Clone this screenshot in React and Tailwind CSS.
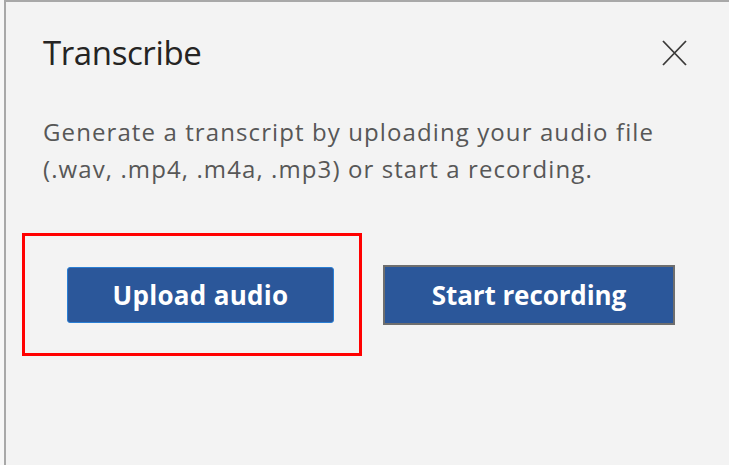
import React from "react";

export default function App() {
  return (
    <div className="w-[729px] h-[465px] bg-[#f7f7f7] overflow-hidden flex" style={{ fontFamily: '"Open Sans", "Noto Sans", sans-serif' }}>
      <div className="ml-[4px] flex-1 h-full bg-[#f3f3f3] border-l-2 border-t-2 border-[#a8a8a8] flex flex-col">
        <div className="flex items-start justify-between pl-[37px] pr-[42px] pt-[29px]">
          <h1 className="text-[33px] leading-[44px] text-[#252423] tracking-[-0.4px]">Transcribe</h1>
          <button className="mt-[9px] w-[25px] h-[26px] flex items-center justify-center text-[#3b3a39]">
            <svg width="25" height="26" viewBox="0 0 25 26" fill="none" stroke="currentColor" strokeWidth="1.8">
              <path d="M1 1 L24 25 M24 1 L1 25" />
            </svg>
          </button>
        </div>
        <p className="pl-[37px] pr-[20px] mt-[38px] text-[24px] leading-[37px] text-[#575757] tracking-[1.1px]">
          Generate a transcript by uploading your audio file (.wav, .mp4, .m4a, .mp3) or start a recording.
        </p>
        <div className="flex items-start mt-[46px] pl-[16px]">
          <div className="border-[3px] border-[#ff0000] pl-[42px] pr-[25px] pt-[31px] pb-[30px]">
            <button className="w-[267px] h-[56px] rounded-[3px] bg-[#2b579a] border border-[#2a7fd4] text-white text-[26px] font-bold tracking-[0.3px]">
              Upload audio
            </button>
          </div>
          <button className="ml-[21px] mt-[32px] w-[292px] h-[60px] bg-[#2b579a] border-2 border-[#6e6e6e] text-white text-[26px] font-bold tracking-[-0.1px]">
            Start recording
          </button>
        </div>
      </div>
    </div>
  );
}
